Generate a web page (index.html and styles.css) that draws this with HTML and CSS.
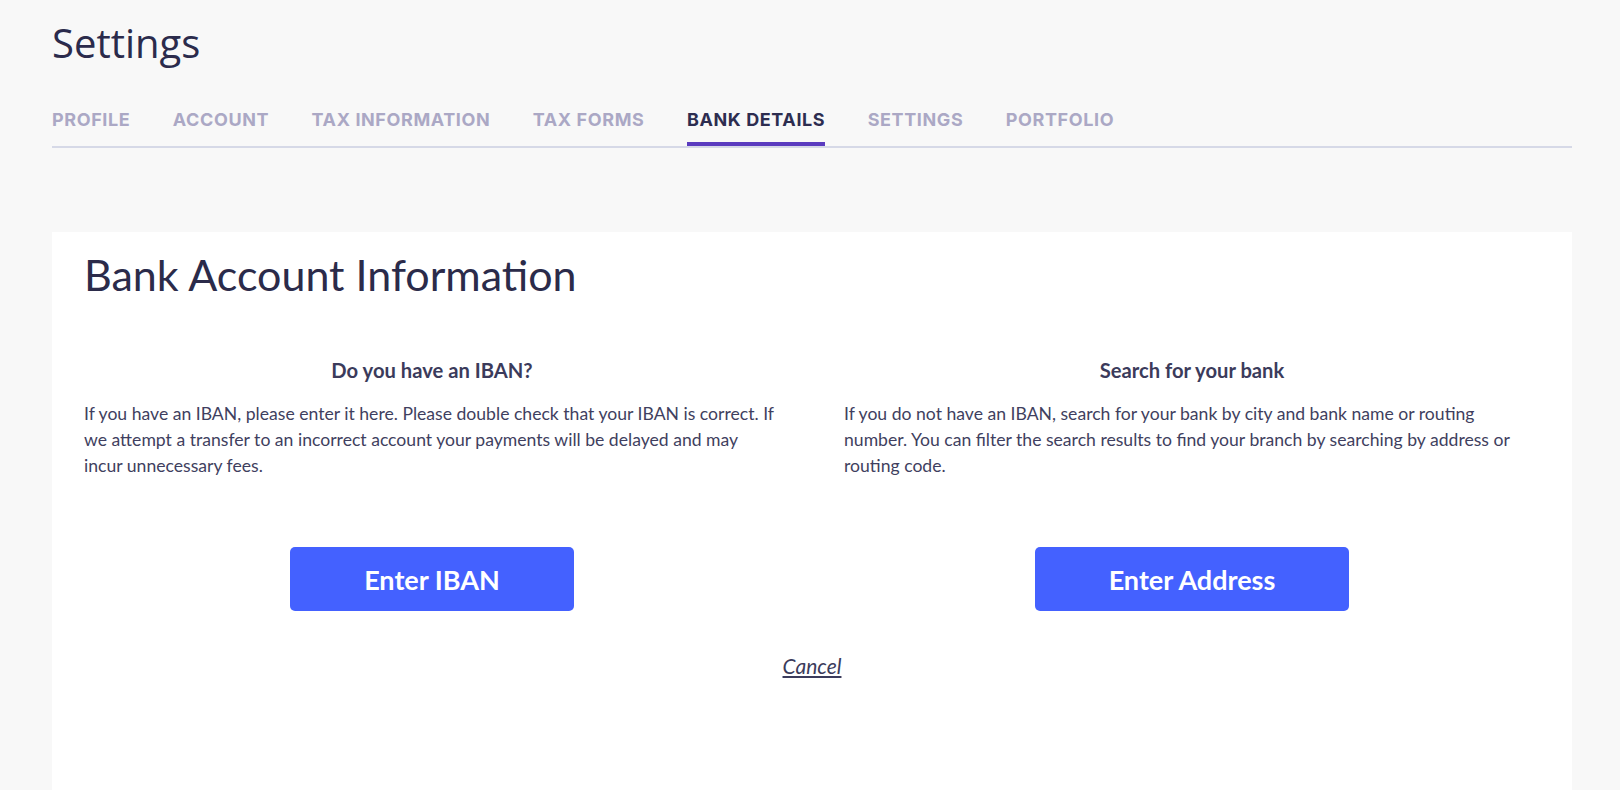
FILE: index.html
```html
<!DOCTYPE html>
<html lang="en">
<head>
<meta charset="utf-8">
<title>Settings - Bank Details</title>
<link rel="stylesheet" href="styles.css">
</head>
<body>
<div class="page">
  <h1 class="page-title">Settings</h1>
  <nav class="tabs">
    <a class="tab">PROFILE</a>
    <a class="tab">ACCOUNT</a>
    <a class="tab">TAX INFORMATION</a>
    <a class="tab">TAX FORMS</a>
    <a class="tab tab-active">BANK DETAILS</a>
    <a class="tab">SETTINGS</a>
    <a class="tab">PORTFOLIO</a>
  </nav>
  <section class="card">
    <h2 class="card-title">Bank Account Information</h2>
    <div class="cols">
      <div class="col">
        <h3 class="col-title">Do you have an IBAN?</h3>
        <p class="col-text">If you have an IBAN, please enter it here. Please double check that your IBAN is correct. If we attempt a transfer to an incorrect account your payments will be delayed and may incur unnecessary fees.</p>
        <div class="btn-row"><button class="btn">Enter IBAN</button></div>
      </div>
      <div class="col">
        <h3 class="col-title">Search for your bank</h3>
        <p class="col-text">If you do not have an IBAN, search for your bank by city and bank name or routing number. You can filter the search results to find your branch by searching by address or routing code.</p>
        <div class="btn-row"><button class="btn">Enter Address</button></div>
      </div>
    </div>
    <div class="cancel-row"><a class="cancel">Cancel</a></div>
  </section>
</div>
</body>
</html>
```
FILE: styles.css
```css
* { box-sizing: border-box; }
html, body { margin: 0; padding: 0; }
body {
  background: #f8f8f8;
  font-family: "Lato", "Liberation Sans", sans-serif;
  color: #2b2b4a;
  height: 790px;
  overflow: hidden;
}
.page {
  padding: 19px 48px 0 52px;
}
.page-title {
  margin: 0;
  font-family: "Open Sans", "Liberation Sans", sans-serif;
  font-weight: 400;
  font-size: 40px;
  line-height: 48px;
  color: #2b2b4c;
}
.tabs {
  display: flex;
  gap: 42.5px;
  margin-top: 42px;
  border-bottom: 2px solid #d6d9e7;
}
.tab {
  font-family: "Inter", "Liberation Sans", sans-serif;
  font-weight: 700;
  font-size: 18px;
  line-height: 22px;
  letter-spacing: 0.6px;
  color: #aba8c5;
  padding-bottom: 11px;
  border-bottom: 4px solid transparent;
  cursor: pointer;
}
.tab-active {
  color: #2d2d50;
  border-bottom-color: #5a3bbf;
}
.card {
  margin-top: 84px;
  background: #ffffff;
  padding: 17px 32px 120px;
}
.card-title {
  margin: 0;
  font-weight: 400;
  font-size: 43px;
  line-height: 52px;
  color: #2b2b4a;
}
.cols {
  display: grid;
  grid-template-columns: 1fr 1fr;
  column-gap: 64px;
  margin-top: 57px;
}
.col {
  display: flex;
  flex-direction: column;
}
.col-title {
  margin: 0;
  text-align: center;
  font-weight: 700;
  font-size: 20.2px;
  line-height: 24px;
  color: #3b3b5b;
}
.col-text {
  flex: 1;
  margin: 19px 0 0;
  font-size: 17.6px;
  line-height: 26px;
  color: #3f3f60;
}
.btn-row {
  display: flex;
  justify-content: center;
  margin-top: 68px;
}
.btn {
  height: 64px;
  padding: 0 74px;
  border: none;
  border-radius: 5px;
  background: #4461ff;
  color: #ffffff;
  font-family: "Lato", "Liberation Sans", sans-serif;
  font-weight: 700;
  font-size: 27px;
  cursor: pointer;
}
.cancel-row {
  display: flex;
  justify-content: center;
  margin-top: 43px;
}
.cancel {
  font-style: italic;
  font-size: 21px;
  line-height: 24px;
  color: #3b3b5b;
  text-decoration: underline;
  cursor: pointer;
}
```
